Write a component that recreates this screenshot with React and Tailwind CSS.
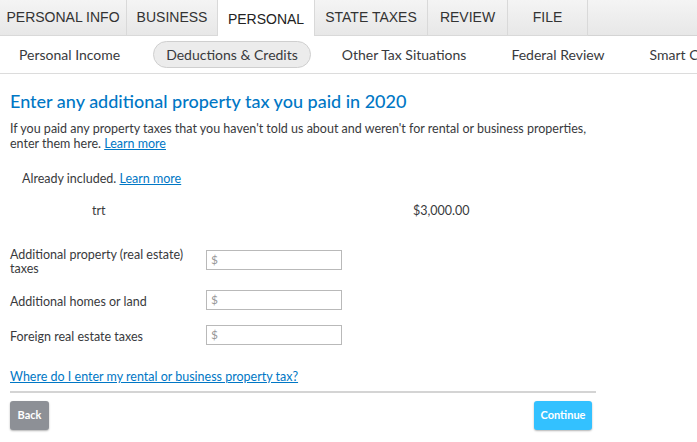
import React from "react";

const tabs = [
  { label: "PERSONAL INFO", w: "w-[127px]" },
  { label: "BUSINESS", w: "w-[91px]" },
  { label: "PERSONAL", w: "w-[97px]", active: true },
  { label: "STATE TAXES", w: "w-[113px]" },
  { label: "REVIEW", w: "w-[80px]" },
  { label: "FILE", w: "w-[80px]" },
];

const subNav = [
  { label: "Personal Income", cls: "ml-[19px]" },
  { label: "Deductions & Credits", cls: "ml-[33px]", active: true },
  { label: "Other Tax Situations", cls: "ml-[31px]" },
  { label: "Federal Review", cls: "ml-[45px]" },
  { label: "Smart Check", cls: "ml-[45px]" },
];

const fields = [
  { label: ["Additional property (real estate)", "taxes"], row: "h-[40px]", pad: "" },
  { label: ["Additional homes or land"], row: "h-[35px]", pad: "pt-[7px]" },
  { label: ["Foreign real estate taxes"], row: "h-[35px]", pad: "pt-[7px]" },
];

function MoneyInput() {
  return (
    <div className="mt-[2px] flex h-[20px] w-[136px] items-center border border-[#b9b9b9] bg-white pl-[4px] text-[12px] text-[#999]">
      $
    </div>
  );
}

export default function App() {
  return (
    <div className="h-[442px] w-[697px] overflow-hidden bg-white font-['Lato','Noto_Sans',sans-serif] text-[#393a3d]">
      <div className="flex h-[36px] bg-[linear-gradient(#f4f4f4,#e7e7e7)] font-['Liberation_Sans',Arial,sans-serif] text-[14px]">
        {tabs.map((t) => (
          <div
            key={t.label}
            className={`${t.w} flex shrink-0 items-center justify-center border-r border-[#d9d9d9] ${
              t.active ? "border-b-0 bg-white pt-[3px] text-[#222]" : "border-b border-[#d4d4d4] text-[#333]"
            }`}
          >
            {t.label}
          </div>
        ))}
        <div className="flex-1 border-b border-[#d4d4d4]" />
      </div>

      <div className="flex h-[38px] items-center overflow-hidden whitespace-nowrap border-b border-[#dcdcdc] text-[14px] text-[#393a3d]">
        {subNav.map((s) => (
          <div
            key={s.label}
            className={`${s.cls} shrink-0 ${
              s.active ? "rounded-full border border-[#cfcfcf] bg-[#ececec] px-[12px] py-[2px]" : ""
            }`}
          >
            {s.label}
          </div>
        ))}
      </div>

      <div className="px-[10px]">
        <h1 className="mt-[15px] text-[18px] font-medium leading-[24px] text-[#0077c5]">
          Enter any additional property tax you paid in 2020
        </h1>
        <p className="mt-[8px] text-[12.5px] leading-[15px]">
          If you paid any property taxes that you haven't told us about and weren't for rental or business properties,
          <br />
          enter them here. <span className="text-[#0077c5] underline">Learn more</span>
        </p>

        <div className="ml-[12px] mt-[19px] text-[12.5px]">
          Already included. <span className="text-[#0077c5] underline">Learn more</span>
        </div>

        <div className="mt-[13px] flex text-[12.5px]">
          <div className="ml-[82px] w-[321px]">trt</div>
          <div>$3,000.00</div>
        </div>

        <div className="mt-[27px] flex flex-col text-[12.5px]">
          {fields.map((f) => (
            <div key={f.label[0]} className={`flex items-start ${f.row}`}>
              <div className={`w-[196px] leading-[14px] ${f.pad}`}>
                {f.label.map((l) => (
                  <div key={l}>{l}</div>
                ))}
              </div>
              <MoneyInput />
            </div>
          ))}
        </div>

        <div className="mt-[11px] text-[12.5px] leading-[15px] text-[#0077c5] underline">
          Where do I enter my rental or business property tax?
        </div>

        <div className="mt-[7px] h-[2px] w-[586px] bg-[#d4d4d4]" />

        <div className="mt-[8px] flex w-[582px] justify-between">
          <button className="h-[29px] w-[39px] rounded-[3px] bg-[#8d9096] text-[11px] font-bold text-white shadow-[0_1px_2px_rgba(0,0,0,0.3)]">
            Back
          </button>
          <button className="h-[29px] w-[58px] rounded-[3px] bg-[#33c1ff] text-[11px] font-bold text-white shadow-[0_1px_2px_rgba(0,0,0,0.3)]">
            Continue
          </button>
        </div>
      </div>
    </div>
  );
}
